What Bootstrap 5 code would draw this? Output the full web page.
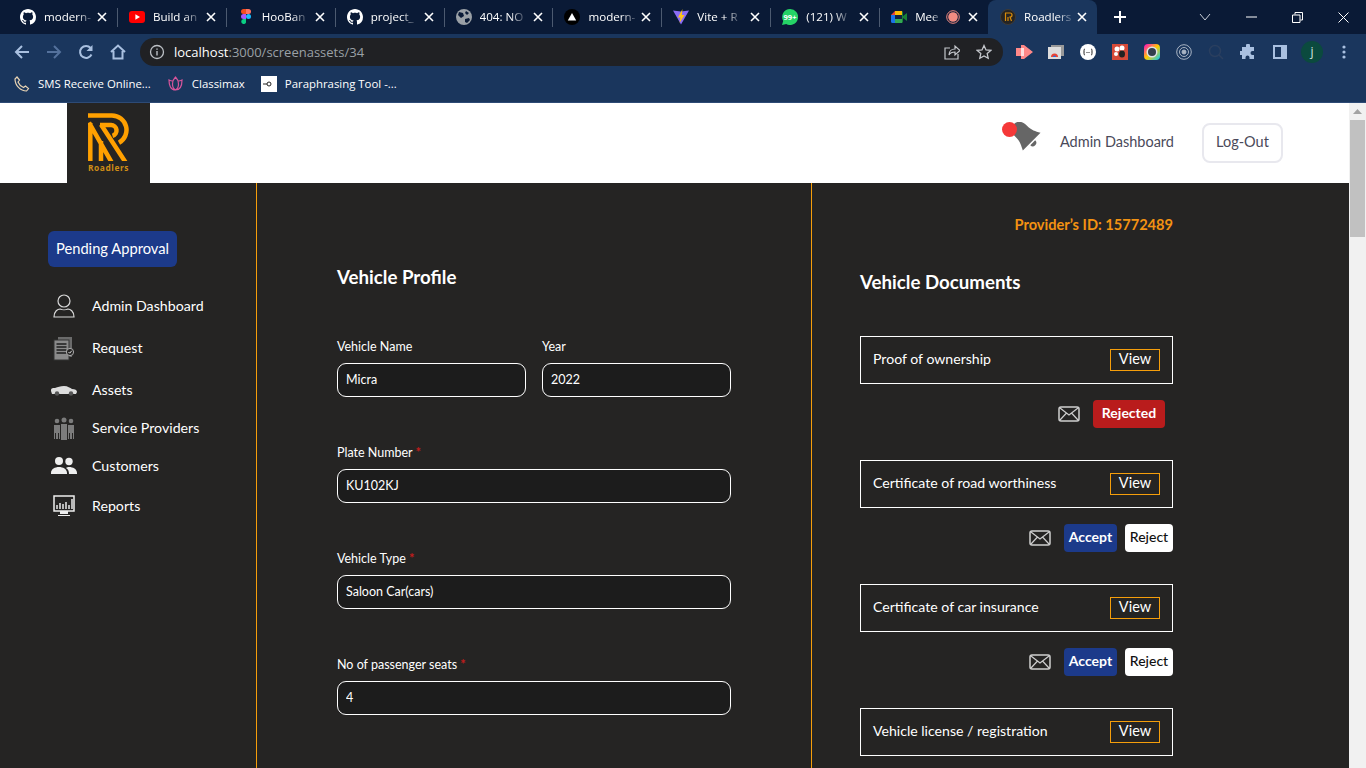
<!DOCTYPE html>
<html lang="en">
<head>
    <meta charset="UTF-8">
    <meta name="viewport" content="width=device-width, initial-scale=1.0">
    <title>Roadlers</title>
    <link rel="stylesheet" href="https://cdn.jsdelivr.net/npm/bootstrap@5.3.0/dist/css/bootstrap.min.css">
    <style>
        html, body { height: 768px; overflow: hidden; }
        body { font-family: "Lato", "Liberation Sans", sans-serif; background: #252423; }

        /* browser chrome */
        .chrome-ui { font-family: "Open Sans", "Liberation Sans", sans-serif; color: #fff; }
        .tab-strip { height: 34px; background: #0a1a36; padding-left: 8px; }
        .tab-item { width: 108.9px; height: 34px; padding-left: 12px; position: relative; font-size: 11.6px; flex: none; }
        .tab-item + .tab-item::before { content: ""; position: absolute; left: 0; top: 8px; height: 19px; width: 1px; background: #4c5a70; }
        .tab-item.is-active { background: #1a365d; border-radius: 8px 8px 0 0; }
        .tab-item.is-active::before { display: none; }
        .tab-ico { width: 16px; height: 16px; flex: none; margin-right: 8px; }
        .tab-name { max-width: 50px; white-space: nowrap; overflow: hidden; -webkit-mask-image: linear-gradient(90deg, #000 70%, rgba(0,0,0,.25)); mask-image: linear-gradient(90deg, #000 70%, rgba(0,0,0,.25)); }
        .rec-ico { width: 14px; height: 14px; margin-left: 7px; flex: none; }
        .tab-close { width: 10px; height: 10px; position: absolute; left: 89px; top: 12px; }
        .win-btn { width: 46px; height: 34px; }
        .tool-bar { height: 35px; background: #1a365d; padding-left: 6px; }
        .tool-btn { width: 32px; height: 28px; flex: none; }
        .omni-box { width: 863px; height: 28px; background: #202124; border-radius: 14px; margin-left: 6px; margin-right: 5px; padding: 0 3px 0 9px; font-size: 13px; flex: none; }
        .omni-url { color: #fff; margin-left: 9px; padding-top: 2px; }
        .omni-url span { color: #9aa0a6; }
        .mark-bar { height: 34px; background: #1a365d; border-bottom: 1px solid #2d4a75; padding: 0 0 4px 14px; font-size: 11.4px; }

        /* page header */
        .page-view { height: 665px; }
        .page-scroll { width: 17px; background: #f1f1f1; flex: none; }
        .scroll-up { height: 17px; }
        .scroll-thumb { height: 117px; background: #c1c1c1; margin: 0 1px; }
        .top-head { height: 80px; background: #fff; padding-left: 67px; }
        .logo-box { width: 83px; height: 80px; background: #252423; padding-top: 10px; }
        .logo-word { color: #cf8d16; font-size: 8.4px; font-weight: 700; letter-spacing: .55px; line-height: 10px; font-family: "Open Sans", sans-serif; }
        .bell-wrap { width: 40px; height: 32px; margin-right: 18px; position: relative; top: -5px; }
        .head-link { color: #4a4a5a; font-size: 14.5px; margin-right: 28px; margin-bottom: 2px; }
        .logout-btn { width: 81px; height: 40px; margin-right: 66px; border: 2px solid #e8e8ee; border-radius: 8px; font-size: 14.5px; color: #4a4a5a; padding: 0 0 2px; }

        /* columns */
        .work-area { height: 585px; overflow: hidden; color: #fff; background: #252423; }
        .side-col { width: 257px; border-right: 1px solid #f59e0b; padding: 48px 0 0 48px; flex: none; }
        .mid-col { width: 555px; border-right: 1px solid #f59e0b; padding: 82px 0 0 80px; flex: none; }
        .doc-col { padding: 34px 0 0 48px; width: 361px; flex: none; }
        .pending-btn { width: 129px; height: 36px; background: #1c3a8a; border: 0; border-radius: 6px; color: #fff; font-size: 14.7px; padding: 0 0 2px; margin-bottom: 20px; }
        .side-item { height: 38px; font-size: 14.2px; color: #fff; }
        .gap-far { margin-top: 4px; }
        .gap-mid { margin-top: 2px; }
        .side-ico { width: 26px; height: 26px; margin: 0 15px 0 3px; flex: none; }
        .sec-title { font-size: 18.7px; font-weight: 700; line-height: 24px; }
        .vehicle-form { width: 394px; margin-top: 50px; }
        .field-label { font-size: 12.5px; line-height: 16px; margin-bottom: 8px; display: block; color: #fff; }
        .req-star { color: #c01c1c; font-weight: 700; font-size: 13px; line-height: 0; }
        .dark-input, .dark-input:focus { height: 34px; background: #1c1c1c; border: 1px solid #fff; border-radius: 9px; color: #fff; font-size: 12.5px; padding: 0 8px 2px; box-shadow: none; font-family: inherit; }
        .field-gap { margin-bottom: 48px; }
        .provider-id { color: #f39212; font-weight: 700; font-size: 14.6px; line-height: 16px; width: 313px; text-align: right; }
        .doc-title { margin: 37px 0 42px; }
        .doc-row { width: 313px; height: 48px; border: 1px solid #fff; padding: 0 12px; font-size: 14.1px; }
        .doc-name { margin-bottom: 2px; }
        .view-btn { width: 50px; height: 22px; border: 1px solid #f59e0b; border-radius: 0; color: #fff; background: transparent; font-size: 14.5px; padding: 0 0 2px; line-height: 1; }
        .doc-acts { width: 313px; height: 28px; margin-top: 16px; margin-bottom: 32px; }
        .mail-ico { width: 22px; height: 16px; flex: none; }
        .act-btn { height: 28px; border: 0; border-radius: 4px; font-size: 14px; padding: 0 0 2px; line-height: 1; }
        .act-accept { width: 53px; background: #1c3a8a; color: #fff; font-weight: 700; margin-left: 13px; }
        .act-reject { width: 48px; background: #fff; color: #111; margin-left: 8px; font-weight: 500; }
        .act-rejected { width: 72px; background: #b91c1c; color: #fff; font-weight: 700; margin-left: 13px; margin-right: 8px; }
    </style>
</head>
<body>
<svg width="0" height="0" class="position-absolute">
    <symbol id="x-mark" viewBox="0 0 10 10"><path d="M1 1l8 8M9 1l-8 8" stroke="#fff" stroke-width="1.600" fill="none"/></symbol>
    <symbol id="gh-mark" viewBox="0 0 16 16"><path fill="#fff" d="M8 0C3.58 0 0 3.58 0 8c0 3.54 2.29 6.53 5.47 7.59.4.07.55-.17.55-.38 0-.19-.01-.82-.01-1.49-2.01.37-2.53-.49-2.69-.94-.09-.23-.48-.94-.82-1.13-.28-.15-.68-.52-.01-.53.63-.01 1.08.58 1.23.82.72 1.21 1.87.87 2.33.66.07-.52.28-.87.51-1.07-1.78-.2-3.64-.89-3.64-3.95 0-.87.31-1.59.82-2.15-.08-.2-.36-1.02.08-2.12 0 0 .67-.21 2.2.82.64-.18 1.32-.27 2-.27s1.36.09 2 .27c1.53-1.04 2.2-.82 2.2-.82.44 1.1.16 1.92.08 2.12.51.56.82 1.27.82 2.15 0 3.07-1.87 3.75-3.65 3.95.29.25.54.73.54 1.48 0 1.07-.01 1.93-.01 2.2 0 .21.15.46.55.38A8.01 8.01 0 0 0 16 8c0-4.42-3.58-8-8-8z"/></symbol>
    <symbol id="mail-mark" viewBox="0 0 22 16"><rect x="1" y="1" width="20" height="14" rx="2" fill="none" stroke="#cfcfcf" stroke-width="1.500"/><path d="M2 2l9 7 9-7M2 14l6.500-7M20 14l-6.500-7" fill="none" stroke="#cfcfcf" stroke-width="1.200"/></symbol>
    <clipPath id="logo-clip"><rect width="41" height="48"/></clipPath>
</svg>

<div class="chrome-ui">
    <div class="tab-strip d-flex align-items-center">
        <div class="tab-item d-flex align-items-center"><svg class="tab-ico"><use href="#gh-mark"/></svg><div class="tab-name">modern-</div><svg class="tab-close"><use href="#x-mark"/></svg></div>
        <div class="tab-item d-flex align-items-center"><svg class="tab-ico" viewBox="0 0 16 16"><rect y="2" width="16" height="12" rx="3" fill="#f00"/><path d="M6.400 5.200v5.600L11 8z" fill="#fff"/></svg><div class="tab-name">Build an</div><svg class="tab-close"><use href="#x-mark"/></svg></div>
        <div class="tab-item d-flex align-items-center"><svg class="tab-ico" viewBox="0 0 16 16"><path fill="#f24e1e" d="M5 0h3v5H5.500a2.500 2.500 0 0 1 0-5z"/><path fill="#ff7262" d="M8 0h2.500a2.500 2.500 0 0 1 0 5H8z"/><path fill="#a259ff" d="M5.500 5H8v5H5.500a2.500 2.500 0 0 1 0-5z"/><circle cx="10.500" cy="7.500" r="2.500" fill="#1abcfe"/><path fill="#0acf83" d="M5.500 10H8v3.500a2.500 2.500 0 1 1-2.500-3.500z"/></svg><div class="tab-name">HooBan</div><svg class="tab-close"><use href="#x-mark"/></svg></div>
        <div class="tab-item d-flex align-items-center"><svg class="tab-ico"><use href="#gh-mark"/></svg><div class="tab-name">project_</div><svg class="tab-close"><use href="#x-mark"/></svg></div>
        <div class="tab-item d-flex align-items-center"><svg class="tab-ico" viewBox="0 0 16 16"><circle cx="8" cy="8" r="8" fill="#9aa0a6"/><path fill="#0a1a36" d="M3 3l4 1 1 3-3 2-3-3zM9 10l4-1 1 2-3 3-2-1zM10 2l3 2-2 2-2-2z"/></svg><div class="tab-name">404: NO</div><svg class="tab-close"><use href="#x-mark"/></svg></div>
        <div class="tab-item d-flex align-items-center"><svg class="tab-ico" viewBox="0 0 16 16"><circle cx="8" cy="8" r="8" fill="#000"/><path d="M8 4l4.200 7.500H3.800z" fill="#fff"/></svg><div class="tab-name">modern-</div><svg class="tab-close"><use href="#x-mark"/></svg></div>
        <div class="tab-item d-flex align-items-center"><svg class="tab-ico" viewBox="0 0 16 16"><path d="M0 1.500l8 1 8-1-8 14z" fill="#8b6cf6"/><path d="M9.500 0L5 8.500h2.500L6.500 14l5-8H8.800z" fill="#ffc517"/></svg><div class="tab-name">Vite + R</div><svg class="tab-close"><use href="#x-mark"/></svg></div>
        <div class="tab-item d-flex align-items-center"><svg class="tab-ico" viewBox="0 0 16 16"><path d="M8 0a8 8 0 1 1-3.800 15L0 16l1.200-4A8 8 0 0 1 8 0z" fill="#25d366"/><text x="8" y="10.500" font-size="7.500" font-weight="700" text-anchor="middle" fill="#fff" font-family="Open Sans, sans-serif">99+</text></svg><div class="tab-name">(121) W</div><svg class="tab-close"><use href="#x-mark"/></svg></div>
        <div class="tab-item d-flex align-items-center"><svg class="tab-ico" viewBox="0 0 16 16"><path d="M4 2h7v4H4z" fill="#fbbc04"/><path d="M0 6l4-4v4z" fill="#ea4335"/><path d="M0 6h4v4H0z" fill="#1a73e8"/><path d="M0 10h4v4H1.500A1.500 1.500 0 0 1 0 12.500z" fill="#1a73e8"/><path d="M4 10h7v4H4z" fill="#34a853"/><path d="M11 2v12l1-1V9l4 3V4l-4 3V3z" fill="#188038"/><rect x="4" y="6" width="7" height="4" fill="#12233f"/></svg><div class="tab-name">Mee</div><svg class="rec-ico" viewBox="0 0 14 14"><circle cx="7" cy="7" r="6.300" fill="none" stroke="#f28b82"/><circle cx="7" cy="7" r="4.800" fill="#f28b82"/></svg><svg class="tab-close"><use href="#x-mark"/></svg></div>
        <div class="tab-item is-active d-flex align-items-center"><svg class="tab-ico" viewBox="0 0 16 16"><circle cx="8" cy="8" r="7.500" fill="#252423" stroke="#3d3b38"/><path d="M5 4h5a2 2 0 0 1 0 4l1.500 4M5.500 4v8M8 8v4" stroke="#d98c0a" stroke-width="1.200" fill="none"/></svg><div class="tab-name">Roadlers</div><svg class="tab-close"><use href="#x-mark"/></svg></div>
        <svg width="14" height="14" viewBox="0 0 14 14" class="ms-3"><path d="M7 1v12M1 7h12" stroke="#fff" stroke-width="2"/></svg>
        <div class="ms-auto d-flex align-items-center">
            <div class="win-btn d-flex align-items-center justify-content-center"><svg width="12" height="8" viewBox="0 0 12 8"><path d="M1 1l5 6 5-6" stroke="#c8ced8" fill="none"/></svg></div>
            <div class="win-btn d-flex align-items-center justify-content-center"><svg width="11" height="2" viewBox="0 0 11 2"><path d="M0 1h11" stroke="#fff"/></svg></div>
            <div class="win-btn d-flex align-items-center justify-content-center"><svg width="11" height="11" viewBox="0 0 11 11"><path d="M3 2.500V.5h7.500V8H8.500M.5 3h7.500v7.500H.5z" stroke="#fff" fill="none"/></svg></div>
            <div class="win-btn d-flex align-items-center justify-content-center"><svg width="11" height="11" viewBox="0 0 11 11"><path d="M.5.5l10 10M10.500.5l-10 10" stroke="#fff"/></svg></div>
        </div>
    </div>

    <div class="tool-bar d-flex align-items-center">
        <div class="tool-btn d-flex align-items-center justify-content-center"><svg width="16" height="16" viewBox="0 0 16 16"><path d="M15 8H2M8 2L2 8l6 6" stroke="#a9c0e0" stroke-width="2" fill="none"/></svg></div>
        <div class="tool-btn d-flex align-items-center justify-content-center"><svg width="16" height="16" viewBox="0 0 16 16"><path d="M1 8h13M8 2l6 6-6 6" stroke="#54719c" stroke-width="2" fill="none"/></svg></div>
        <div class="tool-btn d-flex align-items-center justify-content-center"><svg width="16" height="16" viewBox="0 0 16 16"><path d="M13.500 10.500A6 6 0 1 1 12.600 4" stroke="#a9c0e0" stroke-width="2" fill="none"/><path d="M14.500 1v6h-6z" fill="#a9c0e0"/></svg></div>
        <div class="tool-btn d-flex align-items-center justify-content-center"><svg width="16" height="16" viewBox="0 0 16 16"><path d="M1 8l7-6.500L15 8M3.500 7v7.500h9V7" stroke="#a9c0e0" stroke-width="2" fill="none"/></svg></div>
        <div class="omni-box d-flex align-items-center">
            <svg width="16" height="16" viewBox="0 0 16 16"><circle cx="8" cy="8" r="6.500" fill="none" stroke="#bdc1c6" stroke-width="1.300"/><path d="M8 7v4.500M8 4.500v1.300" stroke="#bdc1c6" stroke-width="1.400"/></svg>
            <div class="omni-url">localhost<span>:3000/screenassets/34</span></div>
            <div class="ms-auto d-flex">
                <div class="tool-btn d-flex align-items-center justify-content-center"><svg width="16" height="16" viewBox="0 0 16 16"><path d="M14 10v5H1V4h5" stroke="#c4c7cc" fill="none" stroke-width="1.200"/><path d="M5 11c0-4 3-6 6-6V2l5 4.500L11 11V8c-3 0-5 1-6 3z" stroke="#c4c7cc" fill="none" stroke-width="1.200"/></svg></div>
                <div class="tool-btn d-flex align-items-center justify-content-center"><svg width="16" height="16" viewBox="0 0 16 16"><path d="M8 1.500l2 4.400 4.800.5-3.600 3.200 1 4.700L8 11.900l-4.200 2.400 1-4.700L1.200 6.400 6 5.900z" stroke="#c4c7cc" fill="none" stroke-width="1.300"/></svg></div>
            </div>
        </div>
        <div class="tool-btn d-flex align-items-center justify-content-center"><svg width="17" height="14" viewBox="0 0 17 14"><path d="M0 3h5V0h3l9 7-9 7H5v-3H0z" fill="#f88"/><path d="M5 3h3v8H5z" fill="#fdd"/></svg></div>
        <div class="tool-btn d-flex align-items-center justify-content-center"><svg width="16" height="16" viewBox="0 0 16 16"><rect x="3" y="1" width="13" height="11" fill="#999"/><rect y="3" width="13" height="12" fill="#ddd"/><path d="M3 13a3.500 3.500 0 0 1 7 0z" fill="#ea4335"/><path d="M5 13a1.500 1.500 0 0 1 3 0z" fill="#1a73e8"/></svg></div>
        <div class="tool-btn d-flex align-items-center justify-content-center"><svg width="16" height="16" viewBox="0 0 16 16"><circle cx="8" cy="8" r="8" fill="#fff"/><path d="M5 5c-1 0-1 1-1 3s0 3 1 3M11 5c1 0 1 1 1 3s0 3-1 3" stroke="#222" fill="none"/><path d="M6.500 8.500h3" stroke="#222" stroke-dasharray="1 1"/></svg></div>
        <div class="tool-btn d-flex align-items-center justify-content-center"><svg width="16" height="16" viewBox="0 0 16 16"><rect width="16" height="16" fill="#d64a38"/><circle cx="5" cy="5" r="2.500" fill="#fff"/><circle cx="10" cy="4" r="2.500" fill="#fff"/><circle cx="4" cy="10" r="2" fill="#fff"/><ellipse cx="10" cy="10" rx="3" ry="3.500" fill="#222"/></svg></div>
        <div class="tool-btn d-flex align-items-center justify-content-center"><svg width="16" height="16" viewBox="0 0 16 16"><defs><linearGradient id="ringGrad" x1="0" y1="0" x2="1" y2="1"><stop offset="0" stop-color="#f0c"/><stop offset=".5" stop-color="#fc0"/><stop offset="1" stop-color="#0cf"/></linearGradient></defs><rect width="16" height="16" rx="4" fill="url(#ringGrad)"/><circle cx="8" cy="8" r="5.500" fill="#dfe3e8"/><circle cx="8" cy="8" r="4" fill="#333f4d"/></svg></div>
        <div class="tool-btn d-flex align-items-center justify-content-center"><svg width="16" height="16" viewBox="0 0 16 16" fill="none" stroke="#a9b4c4"><circle cx="8" cy="8" r="7.300"/><circle cx="8" cy="8" r="4.500"/><circle cx="8" cy="8" r="2" fill="#a9b4c4"/></svg></div>
        <div class="tool-btn d-flex align-items-center justify-content-center"><svg width="16" height="16" viewBox="0 0 16 16" fill="none" stroke="#2a3f5f" stroke-width="1.500"><circle cx="7" cy="7" r="5.500"/><path d="M11 11l4 4"/></svg></div>
        <div class="tool-btn d-flex align-items-center justify-content-center"><svg width="16" height="16" viewBox="0 0 16 16"><path fill="#a9c0e0" d="M6 1.500a2 2 0 0 1 4 0V3h4v4h-1.500a2 2 0 0 0 0 4H14v4H9.500v-1.500a2 2 0 0 0-4 0V15H2v-4H.5a2 2 0 0 1 0-4H2V3h4z"/></svg></div>
        <div class="tool-btn d-flex align-items-center justify-content-center"><svg width="14" height="14" viewBox="0 0 14 14"><rect x="1" y="1" width="12" height="12" fill="none" stroke="#a9c0e0" stroke-width="2"/><rect x="8" y="1" width="5" height="12" fill="#a9c0e0"/></svg></div>
        <div class="tool-btn d-flex align-items-center justify-content-center"><div class="d-flex align-items-center justify-content-center rounded-circle" style="width:22px;height:22px;background:#0b4a3e;font-size:12px;color:#d5e8e0">j</div></div>
        <div class="tool-btn d-flex align-items-center justify-content-center"><svg width="4" height="14" viewBox="0 0 4 14" fill="#a9c0e0"><circle cx="2" cy="2" r="1.600"/><circle cx="2" cy="7" r="1.600"/><circle cx="2" cy="12" r="1.600"/></svg></div>
    </div>

    <div class="mark-bar d-flex align-items-center">
        <svg width="16" height="16" viewBox="0 0 16 16" class="me-2"><path d="M3 1l2.500 3-1.500 2c1 2.500 3 4.500 5.500 5.500l2-1.500 3 2.500-2 2.500C6.500 15 1 9.500 1 3z" fill="none" stroke="#e9d4b4" stroke-width="1.200"/></svg>
        <span class="me-3">SMS Receive Online...</span>
        <svg width="17" height="16" viewBox="0 0 16 16" class="me-2" fill="none" stroke="#d8559c" stroke-width="1.200"><path d="M8 1c2 2 3 4 3 7s-1 5-3 6c-2-1-3-3-3-6s1-5 3-7zM5 5C3.500 5 2.500 4.500 1.500 4c0 5 1.500 10 6.500 10 5 0 6.500-5 6.500-10-1 .5-2 1-3.500 1"/></svg>
        <span class="me-3">Classimax</span>
        <svg width="16" height="16" viewBox="0 0 16 16" class="me-2"><rect width="16" height="16" fill="#fff"/><circle cx="8" cy="8" r="2" fill="none" stroke="#222"/><path d="M2 8h4" stroke="#222"/></svg>
        <span>Paraphrasing Tool -...</span>
    </div>
</div>

<div class="page-view d-flex">
    <div class="flex-grow-1 overflow-hidden">
        <header class="top-head d-flex align-items-center">
            <div class="logo-box d-flex flex-column align-items-center align-self-start">
                <svg width="41" height="50" viewBox="0 0 41 50" fill="none" stroke="#ffa000" stroke-width="4.500">
                    <g clip-path="url(#logo-clip)">
                        <path d="M0 2.500H24a14.500 14.500 0 0 1 7 27.200"/>
                        <path d="M12 12H23a5.500 5.500 0 0 1 1.500 10.800"/>
                        <path d="M2.300 10V50M1 9.500L24 50M13 28V50M13 11.500L38 50"/>
                    </g>
                </svg>
                <div class="logo-word">Roadlers</div>
            </div>
            <div class="ms-auto d-flex align-items-center">
                <div class="bell-wrap">
                    <svg width="40" height="32" viewBox="0 0 40 32"><g transform="translate(12 2) rotate(-45)" fill="#666"><path d="M0 0c5 0 8 4 8 10 0 7 2 10 4.500 15h-25C-10 20-8 17-8 10c0-6 3-10 8-10z"/><path d="M-3.500 26.500a3.500 3.500 0 0 0 7 0z"/></g><circle cx="7.500" cy="7.500" r="7.500" fill="#f53838"/></svg>
                </div>
                <span class="head-link">Admin Dashboard</span>
                <button class="btn logout-btn" type="button">Log-Out</button>
            </div>
        </header>

        <div class="work-area d-flex">
            <aside class="side-col">
                <button class="btn pending-btn" type="button">Pending Approval</button>
                <div class="side-item d-flex align-items-center"><svg class="side-ico" viewBox="0 0 26 26" fill="none" stroke="#d8d8d8" stroke-width="1.200"><circle cx="13" cy="8" r="6"/><path d="M3 24c0-6 4-8 6-8 2 1 6 1 8 0 2 0 6 2 6 8z"/></svg>Admin Dashboard</div>
                <div class="side-item gap-far d-flex align-items-center"><svg class="side-ico" viewBox="0 0 26 26"><rect x="7" y="2" width="14" height="20" fill="#6b6b6b"/><rect x="3" y="5" width="15" height="20" fill="#8a8a8a" stroke="#333"/><path d="M5.500 9h10M5.500 12h10M5.500 15h10M5.500 18h10" stroke="#1e1e1e" stroke-width="1.300"/><circle cx="19" cy="17" r="3.600" fill="#252423" stroke="#aaa"/><path d="M17.500 17l1.200 1.200 2-2.400" stroke="#ddd" fill="none"/></svg>Request</div>
                <div class="side-item gap-far d-flex align-items-center"><svg class="side-ico" viewBox="0 0 26 26"><path fill="#ddd" d="M0 14c0-3 1-3 4-3 3-1 5-2 9-2 4 0 6 2 8 3 3 0 5 1 5 3l-1 2H1z"/><circle cx="6" cy="16.500" r="2.200" fill="#555"/><circle cx="20" cy="16.500" r="2.200" fill="#555"/></svg>Assets</div>
                <div class="side-item d-flex align-items-center"><svg class="side-ico" viewBox="0 0 26 26" fill="#7c7c7c"><circle cx="6" cy="6" r="2.300"/><circle cx="13" cy="5" r="2.500"/><circle cx="20" cy="6" r="2.300"/><path d="M3 10h6v14H8v-6H7v6H5v-6H4v6H3zM10 9h6v16h-6zM17 10h6v14h-1v-6h-1v6h-2v-6h-1v6h-1z"/></svg>Service Providers</div>
                <div class="side-item d-flex align-items-center"><svg class="side-ico" viewBox="0 0 26 26" fill="#eee"><circle cx="8" cy="8" r="4"/><circle cx="18" cy="8.500" r="3.700"/><path d="M0 20c0-4 4-6 8-6s8 2 8 6v1H0zM18 14c4 0 8 2 8 6v1h-8c0-3-1-5-3-6 1-1 2-1 3-1z"/></svg>Customers</div>
                <div class="side-item gap-mid d-flex align-items-center"><svg class="side-ico" viewBox="0 0 26 26"><rect x="3" y="3" width="20" height="15" fill="none" stroke="#eee" stroke-width="1.500"/><path d="M9 18h8v3H9zM7 22h12v1H7z" fill="#eee"/><path d="M6 16v-4M9 16v-6M12 16v-5M15 16v-7M18 16v-4M21 16V6" stroke="#ddd" stroke-width="1.600"/></svg>Reports</div>
            </aside>

            <main class="mid-col">
                <h2 class="sec-title mb-0">Vehicle Profile</h2>
                <form class="vehicle-form">
                    <div class="row gx-3 field-gap">
                        <div class="col-6"><label class="field-label">Vehicle Name</label><input class="form-control dark-input" value="Micra"></div>
                        <div class="col-6"><label class="field-label">Year</label><input class="form-control dark-input" value="2022"></div>
                    </div>
                    <div class="field-gap"><label class="field-label">Plate Number <span class="req-star">*</span></label><input class="form-control dark-input" value="KU102KJ"></div>
                    <div class="field-gap"><label class="field-label">Vehicle Type <span class="req-star">*</span></label><input class="form-control dark-input" value="Saloon Car(cars)"></div>
                    <div class="field-gap"><label class="field-label">No of passenger seats <span class="req-star">*</span></label><input class="form-control dark-input" value="4"></div>
                </form>
            </main>

            <section class="doc-col">
                <div class="provider-id">Provider&rsquo;s ID: 15772489</div>
                <h2 class="sec-title doc-title">Vehicle Documents</h2>

                <div class="doc-row d-flex align-items-center justify-content-between"><span class="doc-name">Proof of ownership</span><button class="btn view-btn" type="button">View</button></div>
                <div class="doc-acts d-flex align-items-center justify-content-end"><svg class="mail-ico"><use href="#mail-mark"/></svg><button class="btn act-btn act-rejected" type="button">Rejected</button></div>

                <div class="doc-row d-flex align-items-center justify-content-between"><span class="doc-name">Certificate of road worthiness</span><button class="btn view-btn" type="button">View</button></div>
                <div class="doc-acts d-flex align-items-center justify-content-end"><svg class="mail-ico"><use href="#mail-mark"/></svg><button class="btn act-btn act-accept" type="button">Accept</button><button class="btn act-btn act-reject" type="button">Reject</button></div>

                <div class="doc-row d-flex align-items-center justify-content-between"><span class="doc-name">Certificate of car insurance</span><button class="btn view-btn" type="button">View</button></div>
                <div class="doc-acts d-flex align-items-center justify-content-end"><svg class="mail-ico"><use href="#mail-mark"/></svg><button class="btn act-btn act-accept" type="button">Accept</button><button class="btn act-btn act-reject" type="button">Reject</button></div>

                <div class="doc-row d-flex align-items-center justify-content-between"><span class="doc-name">Vehicle license / registration</span><button class="btn view-btn" type="button">View</button></div>
            </section>
        </div>
    </div>
    <div class="page-scroll">
        <div class="scroll-up d-flex align-items-center justify-content-center"><svg width="9" height="5" viewBox="0 0 9 5"><path d="M4.500 0L9 5H0z" fill="#a3a3a3"/></svg></div>
        <div class="scroll-thumb"></div>
    </div>
</div>
<script src="https://cdn.jsdelivr.net/npm/bootstrap@5.3.0/dist/js/bootstrap.bundle.min.js"></script>
</body>
</html>
